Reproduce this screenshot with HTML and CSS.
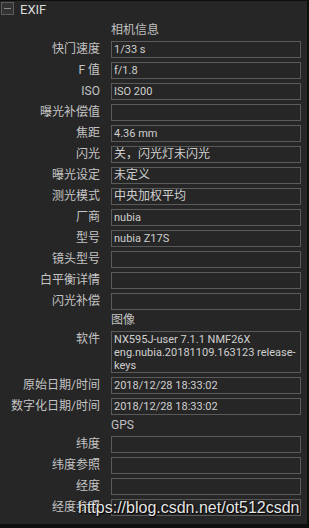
FILE: index.html
```html
<!DOCTYPE html>
<html lang="zh">
<head>
<meta charset="utf-8">
<title>EXIF</title>
<link rel="stylesheet" href="styles.css">
</head>
<body>
<div class="panel">
  <div class="header">
    <span class="toggle"><span class="minus"></span></span>
    <span class="title">EXIF</span>
  </div>
  <div class="grid">
    <div class="label"></div><div class="section">相机信息</div>
    <div class="label">快门速度</div><div class="field">1/33 s</div>
    <div class="label">F 值</div><div class="field">f/1.8</div>
    <div class="label">ISO</div><div class="field">ISO 200</div>
    <div class="label">曝光补偿值</div><div class="field"></div>
    <div class="label">焦距</div><div class="field">4.36 mm</div>
    <div class="label">闪光</div><div class="field zh">关，闪光灯未闪光</div>
    <div class="label">曝光设定</div><div class="field zh">未定义</div>
    <div class="label">测光模式</div><div class="field zh">中央加权平均</div>
    <div class="label">厂商</div><div class="field">nubia</div>
    <div class="label">型号</div><div class="field">nubia Z17S</div>
    <div class="label">镜头型号</div><div class="field"></div>
    <div class="label">白平衡详情</div><div class="field"></div>
    <div class="label">闪光补偿</div><div class="field"></div>
    <div class="label"></div><div class="section">图像</div>
    <div class="label top">软件</div><div class="field multi">NX595J-user 7.1.1 NMF26X eng.nubia.20181109.163123 release-keys</div>
    <div class="label">原始日期/时间</div><div class="field">2018/12/28 18:33:02</div>
    <div class="label">数字化日期/时间</div><div class="field">2018/12/28 18:33:02</div>
    <div class="label"></div><div class="section">GPS</div>
    <div class="label">纬度</div><div class="field"></div>
    <div class="label">纬度参照</div><div class="field"></div>
    <div class="label">经度</div><div class="field"></div>
    <div class="label">经度参照</div><div class="field"></div>
  </div>
  <div class="watermark">https://blog.csdn.net/ot512csdn</div>
</div>
</body>
</html>
```
FILE: styles.css
```css
html, body {
  margin: 0;
  padding: 0;
  background: #0e0e0e;
}
body {
  width: 309px;
  height: 528px;
  overflow: hidden;
}
.panel {
  position: relative;
  margin-top: 1px;
  width: 307px;
  height: 523px;
  background: #262626;
  font-family: Roboto, "Noto Sans CJK SC", sans-serif;
  color: #c4c4c4;
}
.header {
  height: 19px;
  display: flex;
  align-items: flex-start;
}
.toggle {
  box-sizing: border-box;
  margin: 1px 0 0 1px;
  width: 13px;
  height: 13px;
  border: 1px solid #5c5c5c;
  background: #333333;
  display: flex;
  align-items: center;
  justify-content: center;
}
.minus {
  width: 7px;
  height: 1px;
  background: #8a8a8a;
}
.title {
  margin-left: 6px;
  margin-top: 0px;
  font-size: 13px;
  line-height: 17px;
  color: #dcdcdc;
}
.grid {
  display: grid;
  grid-template-columns: 100px 190px;
  column-gap: 11px;
  row-gap: 4px;
  padding-top: 4px;
  align-items: center;
}
.label {
  text-align: right;
  font-size: 12px;
  line-height: 17px;
  color: #c4c4c4;
  white-space: nowrap;
}
.label.top {
  align-self: start;
}
.section {
  height: 13px;
  font-size: 12px;
  line-height: 13px;
  color: #c0c0c0;
}
.field {
  box-sizing: border-box;
  height: 17px;
  border: 1px solid #5a5a5a;
  padding: 0 2px;
  font-size: 11px;
  line-height: 15px;
  color: #cfcfcf;
  white-space: nowrap;
  overflow: hidden;
}
.field.zh {
  font-size: 12px;
}
.field.multi {
  height: 42px;
  white-space: normal;
  line-height: 13px;
  padding-top: 1px;
}
.watermark {
  position: absolute;
  left: 78px;
  top: 499px;
  font-family: "Liberation Sans", Arial, sans-serif;
  font-size: 16px;
  line-height: 16px;
  color: #e6e6e6;
  text-shadow: 0 0 2px #000, 1px 1px 1px #000;
  white-space: nowrap;
}
```
